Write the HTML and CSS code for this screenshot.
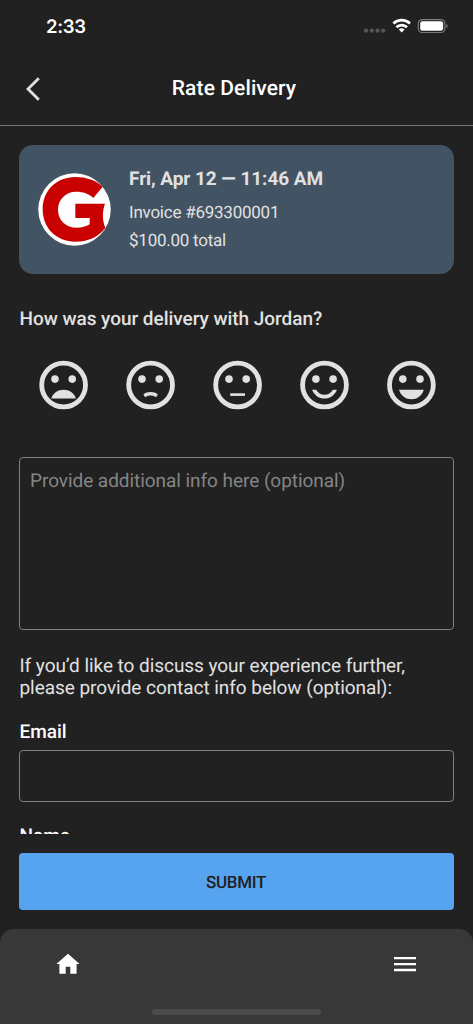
FILE: index.html
```html
<!DOCTYPE html>
<html lang="en">
<head>
<meta charset="utf-8">
<title>Rate Delivery</title>
<link rel="stylesheet" href="styles.css">
</head>
<body>
<div class="app">
  <div class="status">
    <span class="time">2:33</span>
    <svg class="status-icons" width="86" height="18" viewBox="0 0 86 18">
      <g fill="#555"><circle cx="3" cy="13.6" r="2.2"/><circle cx="8.8" cy="13.6" r="2.2"/><circle cx="14.6" cy="13.6" r="2.2"/><circle cx="20.3" cy="13.6" r="2.2"/></g>
      <g fill="none" stroke="#fff" stroke-width="2.7"><path d="M30.4 6.5a11.9 11.9 0 0 1 16.6 0"/><path d="M33.4 10.3a7.6 7.6 0 0 1 10.6 0"/></g>
      <path d="M38.7 15.5l-2.9-2.9a4.2 4.2 0 0 1 5.8 0z" fill="#fff"/>
      <rect x="55.3" y="2.6" width="26.6" height="12.9" rx="4" fill="none" stroke="#7b7b7b" stroke-width="1.2"/>
      <rect x="57.2" y="4.2" width="22.9" height="9.6" rx="2.3" fill="#fff"/>
      <path d="M83.3 6.9c1.9.8 1.9 3.4 0 4.2z" fill="#7b7b7b"/>
    </svg>
  </div>
  <header class="header">
    <svg class="back" width="16" height="26" viewBox="0 0 16 26"><path d="M13.8 2.2L3 13l10.8 10.8" fill="none" stroke="#e0e0e0" stroke-width="2.8"/></svg>
    <h1 class="title">Rate Delivery</h1>
  </header>
  <main class="content">
    <section class="card">
      <svg class="logo" width="73" height="73" viewBox="83 99 219 219">
        <circle cx="192.5" cy="208.5" r="108.7" fill="#fff"/>
        <path d="M277 140C258 121 228 111 195 111C137 111 97 153 97 208C97 264 138 305 195 305C232 305 263 292 285 263C276 241 275 216 284 191H195V234H238V253C227 260 214 263 200 263C166 263 143 240 143 209C143 178 166 155 198 155C218 155 236 161 249 174Z" fill="#c90000"/>
      </svg>
      <div class="card-text">
        <div class="date">Fri, Apr 12 — 11:46 AM</div>
        <div class="detail invoice">Invoice #693300001</div>
        <div class="detail total">$100.00 total</div>
      </div>
    </section>
    <h2 class="question">How was your delivery with Jordan?</h2>
    <div class="faces">
      <svg class="face" viewBox="-25.6 -25 50 50"><circle class="ring" r="21.9"/><circle cx="-8.6" cy="-5.9" r="3.8"/><circle cx="8.6" cy="-5.9" r="3.8"/><path d="M-12.4 13.4C-10.4 8 -5.7 4.7 0 4.7S10.4 8 12.4 13.4Z"/></svg>
      <svg class="face" viewBox="-25.6 -25 50 50"><circle class="ring" r="21.9"/><circle cx="-8.6" cy="-5.9" r="3.8"/><circle cx="8.6" cy="-5.9" r="3.8"/><path d="M-7.2 9.5C-3.5 6.3 3.5 6.3 7.2 9.5L5.5 12.2C2.5 10 -2.5 10 -5.5 12.2Z"/></svg>
      <svg class="face" viewBox="-25.6 -25 50 50"><circle class="ring" r="21.9"/><circle cx="-8.6" cy="-5.9" r="3.8"/><circle cx="8.6" cy="-5.9" r="3.8"/><path d="M-7.4 8.3H7.4V10.9H-7.4Z"/></svg>
      <svg class="face" viewBox="-25.5 -25 50 50"><circle class="ring" r="21.9"/><circle cx="-8.6" cy="-5.9" r="3.8"/><circle cx="8.6" cy="-5.9" r="3.8"/><path d="M-12.4 4.7C-10.4 10 -5.7 13.5 0 13.5S10.4 10 12.4 4.7H8.4C6.6 7.8 3.6 9.7 0 9.7S-6.6 7.8 -8.4 4.7Z"/></svg>
      <svg class="face" viewBox="-25.4 -25 50 50"><circle class="ring" r="21.9"/><circle cx="-8.6" cy="-5.9" r="3.8"/><circle cx="8.6" cy="-5.9" r="3.8"/><path d="M-12.4 4.7H12.4C10.4 11 5.7 14.2 0 14.2S-10.4 11 -12.4 4.7Z"/></svg>
    </div>
    <textarea class="field notes" placeholder="Provide additional info here (optional)"></textarea>
    <p class="contact">If you’d like to discuss your experience further,<br>please provide contact info below (optional):</p>
    <label class="label" for="email">Email</label>
    <input class="field input" id="email" type="email">
    <label class="label name-label" for="name">Name</label>
    <input class="field input" id="name" type="text">
  </main>
  <div class="actions"><button class="submit">SUBMIT</button></div>
  <nav class="nav">
    <div class="nav-items">
      <svg width="24" height="22" viewBox="0 0 24 22"><path d="M12 .7L.4 11.1h3V20.8h6.3V13.8h4.6v7h6.3V11.1h3Z" fill="#fff"/></svg>
      <svg width="22" height="16" viewBox="0 0 22 16"><path d="M0 .9h22v2.4H0zM0 6.9h22v2.4H0zM0 12.8h22v2.4H0z" fill="#fff"/></svg>
    </div>
    <div class="home-bar"></div>
  </nav>
</div>
</body>
</html>
```
FILE: styles.css
```css
* { box-sizing: border-box; }
body { margin: 0; background: #212121; font-family: Roboto, "Liberation Sans", sans-serif; color: #e1e1e1; text-rendering: geometricPrecision; }
.app { display: flex; flex-direction: column; width: 473px; height: 1024px; overflow: hidden; }
.status { display: flex; justify-content: space-between; flex: none; height: 52px; padding: 17px 24px 0 46px; }
.time { font: 600 18.5px/20px Inter, sans-serif; letter-spacing: -0.3px; color: #fff; }
.header { display: grid; grid-template-columns: 48px 1fr 48px; align-items: center; flex: none; height: 74px; padding: 0 5px 0 0; border-bottom: 1px solid #777; }
.back { margin-left: 25px; }
.title { margin: 0; padding-top: 2px; font-size: 21px; line-height: 25px; font-weight: 500; letter-spacing: 0.1px; color: #fff; text-align: center; }
.content { flex: none; height: 708px; padding: 19px 19px 0; overflow: hidden; }
.card { display: flex; height: 129px; padding: 23px 18.5px 0; border-radius: 14px; background: #425363; }
.logo { margin-top: 5px; flex: none; }
.card-text { padding-left: 18.5px; white-space: nowrap; }
.date { font-size: 19px; line-height: 22px; font-weight: 700; letter-spacing: -0.05px; }
.detail { font-size: 17px; line-height: 20px; letter-spacing: -0.24px; }
.invoice { margin-top: 13px; }
.total { margin-top: 8px; }
.question { margin: 33px 0 0 0.5px; font-size: 19px; line-height: 24px; font-weight: 500; letter-spacing: -0.04px; white-space: nowrap; }
.faces { display: grid; grid-template-columns: repeat(5, 1fr); justify-items: center; margin: 29px -0.5px 0 0.5px; }
.face { width: 50px; height: 50px; fill: #e1e1e1; }
.ring { fill: none; stroke: #e1e1e1; stroke-width: 4.8; }
.field { display: block; width: 100%; border: 1px solid #808080; border-radius: 4px; background: transparent; color: #e1e1e1; font: 19px/22px Roboto, sans-serif; text-rendering: geometricPrecision; letter-spacing: -0.05px; resize: none; outline: none; }
.notes { height: 173px; margin-top: 47px; padding: 12px 10px; }
.notes::placeholder { color: #858585; opacity: 1; }
.contact { margin: 25px 0 0 0.5px; font-size: 19px; line-height: 22px; letter-spacing: -0.05px; white-space: nowrap; }
.label { display: block; width: max-content; margin: 21px 0 0 0.5px; font-size: 19px; line-height: 24px; font-weight: 500; color: #fff; }
.name-label { margin-top: 22px; }
.input { height: 52px; margin-top: 6px; }
.actions { flex: none; height: 95px; padding: 19px 19px 0; }
.submit { display: block; width: 100%; height: 57px; padding: 2px 1px 0 0; border: 0; border-radius: 4px; background: #56a4f0; color: #212121; font: 500 17px/20px Roboto, sans-serif; letter-spacing: -0.35px; text-rendering: geometricPrecision; }
.nav { flex: 1; display: flex; flex-direction: column; justify-content: space-between; align-items: center; padding: 24px 0 9px; border-radius: 14px 14px 0 0; background: #383838; }
.nav-items { display: flex; justify-content: space-between; align-items: center; width: 100%; padding: 0 57px 0 56px; }
.home-bar { width: 169px; height: 6px; border-radius: 3px; background: #4b4b4b; }
```
